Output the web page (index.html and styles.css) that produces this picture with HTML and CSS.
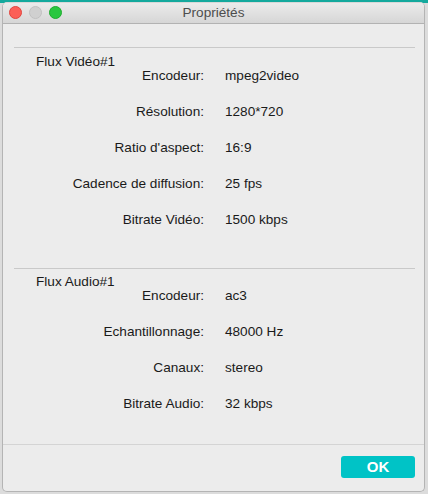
FILE: index.html
```html
<!DOCTYPE html>
<html lang="fr">
<head>
<meta charset="utf-8">
<title>Propriétés</title>
<link rel="stylesheet" href="styles.css">
</head>
<body>
<div class="window">
  <div class="titlebar">
    <div class="lights">
      <span class="light red"></span>
      <span class="light gray"></span>
      <span class="light green"></span>
    </div>
    <div class="title">Propriétés</div>
  </div>
  <div class="content">
    <section class="stream video">
      <div class="heading">Flux Vidéo#1</div>
      <div class="rows">
        <div class="label">Encodeur:</div><div class="value">mpeg2video</div>
        <div class="label">Résolution:</div><div class="value">1280*720</div>
        <div class="label">Ratio d'aspect:</div><div class="value">16:9</div>
        <div class="label">Cadence de diffusion:</div><div class="value">25 fps</div>
        <div class="label">Bitrate Vidéo:</div><div class="value">1500 kbps</div>
      </div>
    </section>
    <section class="stream audio">
      <div class="heading">Flux Audio#1</div>
      <div class="rows">
        <div class="label">Encodeur:</div><div class="value">ac3</div>
        <div class="label">Echantillonnage:</div><div class="value">48000 Hz</div>
        <div class="label">Canaux:</div><div class="value">stereo</div>
        <div class="label">Bitrate Audio:</div><div class="value">32 kbps</div>
      </div>
    </section>
  </div>
  <div class="footer">
    <button class="ok">OK</button>
  </div>
</div>
</body>
</html>
```
FILE: styles.css
```css
* { box-sizing: border-box; }
html, body { margin: 0; padding: 0; }
body {
  width: 428px;
  height: 494px;
  overflow: hidden;
  background: linear-gradient(#14a99d 0, #14a99d 3px, #dcdcdc 3px);
  font-family: "Liberation Sans", Arial, sans-serif;
  font-size: 13.6px;
  color: #1a1a1a;
}
.window {
  margin: 2px 3px 0 2px;
  height: 490px;
  background: #ececec;
  border: 1px solid #b4b4b4;
  border-top-color: #d8d8d8;
  border-radius: 5px;
  display: flex;
  flex-direction: column;
  overflow: hidden;
}
.titlebar {
  position: relative;
  height: 21px;
  flex: none;
  background: linear-gradient(#ebebeb, #d6d6d6);
  border-bottom: 1px solid #b2b2b2;
  display: flex;
  align-items: center;
  justify-content: center;
}
.lights {
  position: absolute;
  left: 6px;
  top: 3px;
  display: flex;
  gap: 7px;
}
.light {
  width: 13px;
  height: 13px;
  border-radius: 50%;
  display: block;
}
.red { background: #fc5f57; border: 1px solid #e0443e; }
.gray { background: #d0d0d0; border: 1px solid #c0c0c0; }
.green { background: #2ac740; border: 1px solid #1eab2f; }
.title {
  color: #4d4d4d;
  font-size: 13.6px;
  line-height: 16px;
}
.content {
  flex: 1;
  padding: 0 9px 0 11px;
}
.stream {
  border-top: 1px solid #c9c9c9;
}
.video { margin-top: 23px; padding-bottom: 40px; }
.heading {
  padding-left: 22px;
  line-height: 12px;
  height: 12px;
  margin-top: 8px;
}
.audio .heading { margin-top: 7px; }
.rows {
  display: grid;
  grid-template-columns: 190px 1fr;
  column-gap: 21px;
  row-gap: 20px;
  line-height: 16px;
}
.label { text-align: right; }
.footer {
  flex: none;
  height: 47px;
  border-top: 1px solid #d4d4d4;
  display: flex;
  justify-content: flex-end;
  align-items: flex-start;
  padding: 11px 9px 0 0;
}
.ok {
  width: 74px;
  height: 22px;
  border: none;
  border-radius: 3px;
  background: #00c3c6;
  color: #fff;
  font-family: "Liberation Sans", Arial, sans-serif;
  font-size: 15px;
  font-weight: bold;
  line-height: 22px;
  padding: 0;
}
```
